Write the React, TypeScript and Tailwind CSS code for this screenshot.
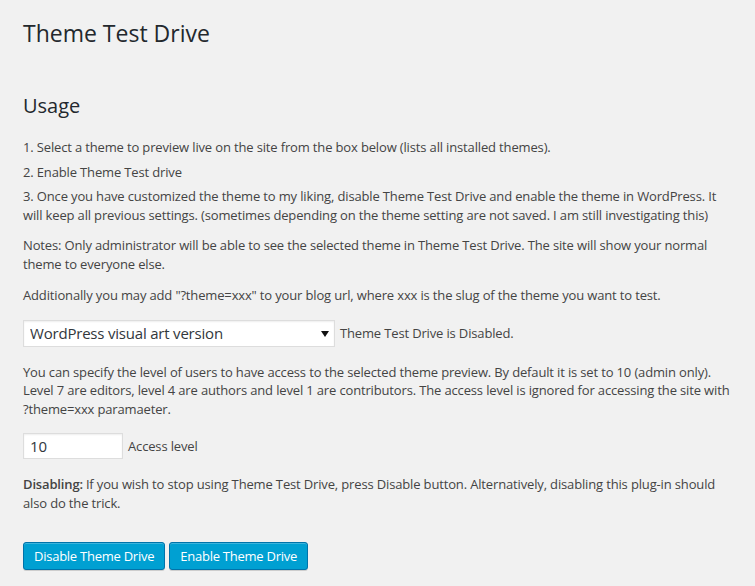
export default function App() {
  return (
    <div className="min-h-screen bg-[#f1f1f1] px-[23px] pb-6 font-['Open_Sans',sans-serif] text-[13px] leading-[18.5px] tracking-[-0.15px] text-[#444]">
      <h1 className="pt-[19px] text-[23px] leading-[29px] font-normal tracking-normal text-[#23282d]">
        Theme Test Drive
      </h1>

      <h2 className="mt-[44px] text-[20px] leading-[28px] font-normal tracking-normal text-[#23282d]">Usage</h2>

      <ol className="mt-[18px]">
        <li className="mb-[6px]">
          1. Select a theme to preview live on the site from the box below (lists all installed themes).
        </li>
        <li className="mb-[6px]">2. Enable Theme Test drive</li>
        <li>
          3. Once you have customized the theme to my liking, disable Theme Test Drive and enable the theme in
          WordPress. It will keep all previous settings. (sometimes depending on the theme setting are not saved. I am
          still investigating this)
        </li>
      </ol>

      <p className="mt-[12px]">
        Notes: Only administrator will be able to see the selected theme in Theme Test Drive. The site will show your
        normal theme to everyone else.
      </p>

      <p className="mt-[13px]">
        Additionally you may add "?theme=xxx" to your blog url, where xxx is the slug of the theme you want to test.
      </p>

      <div className="mt-[15px] flex items-center gap-[5px]">
        <div className="relative">
          <select
            defaultValue="wp-art"
            className="block h-[27px] w-[312px] appearance-none border border-[#ddd] bg-white pl-[6px] pr-6 text-[15px] tracking-[-0.2px] text-[#32373c] shadow-[inset_0_1px_2px_rgba(0,0,0,0.07)] outline-none"
          >
            <option value="wp-art">WordPress visual art version</option>
          </select>
          <svg
            className="pointer-events-none absolute right-[6px] top-[11px]"
            width="8"
            height="6"
            viewBox="0 0 8 6"
          >
            <path d="M0 0h8L4 6z" fill="#111" />
          </svg>
        </div>
        <span>Theme Test Drive is Disabled.</span>
      </div>

      <p className="mt-[16px]">
        You can specify the level of users to have access to the selected theme preview. By default it is set to 10
        (admin only). Level 7 are editors, level 4 are authors and level 1 are contributors. The access level is
        ignored for accessing the site with ?theme=xxx paramaeter.
      </p>

      <div className="mt-[15px] flex items-center gap-[5px]">
        <input
          type="text"
          defaultValue="10"
          className="h-[26px] w-[100px] border border-[#ddd] bg-white px-[6px] text-[15px] text-[#32373c] shadow-[inset_0_1px_2px_rgba(0,0,0,0.07)] outline-none"
        />
        <span>Access level</span>
      </div>

      <p className="mt-[16px]">
        <strong className="mr-[3px] font-semibold">Disabling:</strong>If you wish to stop using Theme Test Drive, press
        Disable button. Alternatively, disabling this plug-in should also do the trick.
      </p>

      <div className="mt-[30px] flex gap-[4px]">
        <button
          type="button"
          className="h-[28px] rounded-[3px] border border-[#0073aa] bg-[#00a0d2] px-[10px] pb-px text-[13px] leading-[26px] tracking-[-0.25px] text-white shadow-[inset_0_1px_0_rgba(120,200,230,0.5),0_1px_0_rgba(0,0,0,0.15)]"
        >
          Disable Theme Drive
        </button>
        <button
          type="button"
          className="h-[28px] rounded-[3px] border border-[#0073aa] bg-[#00a0d2] px-[10px] pb-px text-[13px] leading-[26px] tracking-[-0.25px] text-white shadow-[inset_0_1px_0_rgba(120,200,230,0.5),0_1px_0_rgba(0,0,0,0.15)]"
        >
          Enable Theme Drive
        </button>
      </div>
    </div>
  );
}
